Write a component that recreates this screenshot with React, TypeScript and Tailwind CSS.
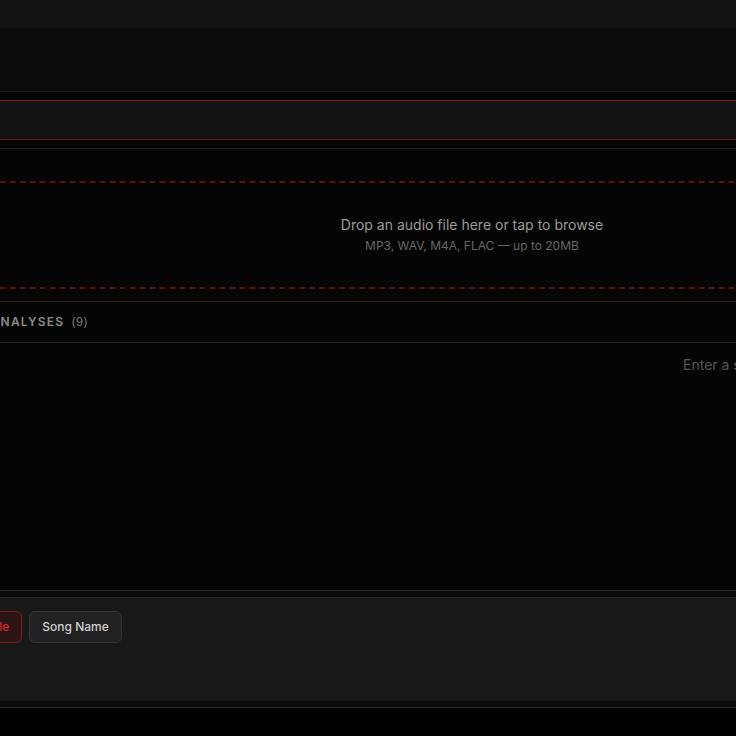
import React from "react";

export default function App() {
  return (
    <div className="w-[736px] h-[736px] overflow-hidden bg-black font-['Inter','Noto_Sans',sans-serif]">
      <div className="-ml-[200px] w-[1344px]">
        {/* top bar */}
        <div className="h-[28px] bg-[#141414]" />
        <div className="h-[64px] bg-[#0b0b0b] border-b border-[#221a1a]" />

        <div className="bg-[#050505]">
          <div className="h-[8px]" />
          {/* input band */}
          <div className="h-[40px] bg-[#141414] border-t border-b border-t-[#861a1a] border-b-[#5e1818]" />
          <div className="h-[8px]" />

          {/* upload section */}
          <div className="border-t border-[#221a1a] pt-[32px] pb-[12px]">
            <div className="h-[108px] pb-[2px] border-2 border-dashed border-[#5e1111] flex flex-col items-center justify-center">
              <div className="text-sm leading-5 text-[#9a9a9a]">
                Drop an audio file here or tap to browse
              </div>
              <div className="mt-[3px] text-xs leading-4 text-[#666666]">
                MP3, WAV, M4A, FLAC — up to 20MB
              </div>
            </div>
          </div>

          {/* list header */}
          <div className="h-[42px] border-t border-b border-[#2a1e1e] flex items-center pl-[131px]">
            <span className="text-xs font-semibold tracking-[0.1em] text-[#8a8a8a]">
              RECENT ANALYSES
            </span>
            <span className="ml-[7px] text-xs tracking-[0.02em] text-[#777777]">
              (9)
            </span>
          </div>

          {/* list content */}
          <div className="h-[247px] pt-[12px] pl-[883px]">
            <div className="text-sm leading-5 text-[#555555] whitespace-nowrap">
              Enter a song name to analyze
            </div>
          </div>
        </div>

        {/* bottom panel */}
        <div className="bg-[#0b0b0b] border-t border-b border-[#2a2a2a] py-[6px]">
          <div className="h-[104px] bg-[#181818] border-t border-[#272727] pt-[13px] pl-[132px] flex items-start gap-[7px]">
            <button className="h-[32px] px-3 rounded-md border border-[#7f1d1d] bg-[#2b1414] text-xs font-medium text-[#d62a2a]">
              Upload File
            </button>
            <button className="h-[32px] px-3 rounded-md border border-[#333333] bg-[#222222] text-xs font-medium text-[#d0d0d0]">
              Song Name
            </button>
          </div>
        </div>
      </div>
    </div>
  );
}
